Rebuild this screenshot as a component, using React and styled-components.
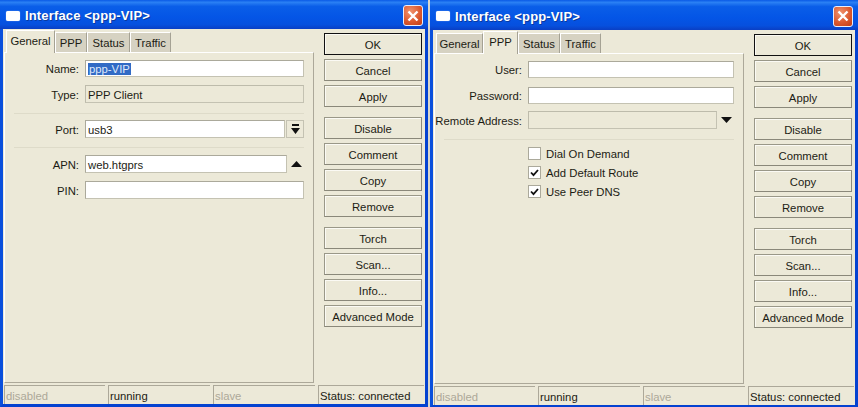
import React from 'react'
import styled, { createGlobalStyle } from 'styled-components'

const Global = createGlobalStyle`
html, body {
  margin: 0;
  padding: 0;
  background: #d8d6cc;
}
* { box-sizing: border-box; }
`

const Desktop = styled.div`
display: flex;
gap: 2px;
width: 858px;
height: 407px;
overflow: hidden;
font-family: "Liberation Sans", Arial, sans-serif;
font-size: 11.3px;
color: #1c1c14;
white-space: nowrap;
`

const Window = styled.div`
display: flex;
flex-direction: column;
width: ${p => p.$width}px;
height: 407px;
background: #ece9d8;
border-left: 3px solid #0a50dc;
border-right: 3px solid #0442d0;
border-bottom: ${p => p.$bottom}px solid #0442d0;
`

const TitleBar = styled.div`
display: flex;
align-items: center;
flex: none;
height: ${p => p.$height}px;
margin: 0 -3px;
padding: 2px 5px 0 6px;
background: linear-gradient(180deg, #0a5ae6 0%, #2a80f4 8%, #0a5ee8 22%, #0455e6 60%, #0650de 85%, #0a3fc4 100%);
`

const TitleIcon = styled.div`
width: 14px;
height: 10px;
background: #fff;
border-radius: 2px;
box-shadow: 0 0 1px #cfe0ff;
`

const TitleText = styled.div`
flex: 1;
margin-left: 5px;
font-size: 13px;
font-weight: bold;
letter-spacing: 0.15px;
color: #fff;
text-shadow: 1px 1px 0 #0a3a9e;
`

const CloseButton = styled.div`
display: flex;
align-items: center;
justify-content: center;
width: 20px;
height: 21px;
border: 1px solid #e8eefc;
border-radius: 3px;
background: radial-gradient(circle at 35% 30%, #f0936e 0%, #dc5a30 55%, #c03c14 100%);
`

const Body = styled.div`
display: flex;
flex: 1;
min-height: 0;
padding-left: 1px;
`

const Main = styled.div`
display: flex;
flex-direction: column;
width: 310px;
`

const TabRow = styled.div`
display: flex;
align-items: flex-end;
flex: none;
height: 23px;
padding-left: 2px;
`

const Tab = styled.div`
display: flex;
align-items: center;
justify-content: center;
position: relative;
width: ${p => p.$width}px;
height: ${p => (p.$active ? 23 : 20)}px;
margin-bottom: ${p => (p.$active ? -1 : 0)}px;
padding-bottom: ${p => (p.$active ? 2 : 0)}px;
background: ${p => (p.$active ? '#ece9d8' : '#d6d2c2')};
border-top: 1px solid #fff;
border-left: 1px solid #fff;
border-right: 1px solid #a5a294;
`

const Panel = styled.div`
flex: 1;
padding: 7px 9px 0 0;
border-top: 1px solid #fff;
border-left: 1px solid #fff;
border-right: 1px solid #aca899;
border-bottom: 1px solid #aca899;
`

const Row = styled.div`
display: flex;
align-items: center;
height: ${p => p.$height || 18}px;
margin-bottom: ${p => p.$gap ?? 8}px;
`

const Label = styled.div`
flex: none;
width: ${p => p.$width}px;
margin-right: 6px;
padding-top: 1px;
text-align: right;
`

const Field = styled.div`
display: flex;
align-items: center;
flex: 1;
height: 100%;
padding: 1px 0 0 2px;
background: ${p => (p.$disabled ? '#ece9d8' : '#fff')};
border: 1px solid ${p => (p.$disabled ? '#bdbbab' : '#aba99b')};
border-bottom-color: #c4c2b2;
border-right-color: #c4c2b2;
`

const Selected = styled.span`
padding: 0 1px;
background: #316ac5;
color: #dfe8fa;
`

const SpinButton = styled.div`
display: flex;
align-items: center;
justify-content: center;
flex: none;
width: 18px;
height: 100%;
margin-left: 1px;
background: #ece9d8;
border: 1px solid #c4c2b2;
`

const ArrowSlot = styled.div`
display: flex;
align-items: center;
justify-content: flex-end;
flex: none;
width: 17px;
padding-right: 2px;
`

const Divider = styled.div`
height: 1px;
margin: ${p => p.$top}px 0 ${p => p.$bottom}px 9px;
background: #dedbc9;
`

const CheckRow = styled.div`
display: flex;
align-items: center;
height: 13px;
margin-bottom: 6px;
padding-left: ${p => p.$indent}px;
`

const CheckBox = styled.div`
display: flex;
align-items: center;
justify-content: center;
flex: none;
width: 13px;
height: 13px;
margin-right: 5px;
background: #fff;
border: 1px solid #aba99b;
`

const Buttons = styled.div`
display: flex;
flex-direction: column;
width: 98px;
margin-left: 10px;
padding-top: ${p => p.$top}px;
`

const ButtonGroup = styled.div`
display: flex;
flex-direction: column;
gap: 4px;
margin-bottom: 10px;
`

const Button = styled.div`
display: flex;
align-items: center;
justify-content: center;
height: 22px;
padding-top: 1px;
background: #ece9d8;
border: 1px solid ${p => (p.$primary ? '#111' : '#8a887a')};
border-top-color: ${p => (p.$primary ? '#111' : '#9a9888')};
border-left-color: ${p => (p.$primary ? '#111' : '#9a9888')};
box-shadow: inset 1px 1px 0 #fbfaf4;
`

const StatusBar = styled.div`
display: flex;
flex: none;
gap: 3px;
height: 19px;
margin-top: 2px;
padding-left: 1px;
`

const StatusCell = styled.div`
display: flex;
align-items: center;
flex: none;
width: ${p => p.$width}px;
padding: 1px 0 0 1px;
color: ${p => (p.$muted ? '#aca899' : '#1c1c14')};
border-top: 1px solid #aca899;
border-left: 1px solid #aca899;
`

const CloseIcon = () => (
  <svg width="12" height="12" viewBox="0 0 12 12">
    <path d="M1.5 1.5 L10.5 10.5 M10.5 1.5 L1.5 10.5" stroke="#fff" strokeWidth="2.4" />
  </svg>
)

const Triangle = ({ up }) => (
  <svg width="11" height="6" viewBox="0 0 11 6">
    <path d={up ? 'M5.5 0 L11 6 L0 6 Z' : 'M0 0 L11 0 L5.5 6 Z'} fill="#111" />
  </svg>
)

const DropBarIcon = () => (
  <svg width="9" height="10" viewBox="0 0 9 10">
    <path d="M1 0 H8 V2 H1 Z M0 4 H9 L4.5 10 Z" fill="#111" />
  </svg>
)

const Check = () => (
  <svg width="9" height="8" viewBox="0 0 9 8">
    <path d="M1 3.5 L3.5 6.2 L8 1" stroke="#111" strokeWidth="1.8" fill="none" />
  </svg>
)

function GeneralTab() {
  return (
    <Panel>
      <Row $height={17}>
        <Label $width={74}>Name:</Label>
        <Field><Selected>ppp-VIP</Selected></Field>
      </Row>
      <Row $gap={0}>
        <Label $width={74}>Type:</Label>
        <Field $disabled>PPP Client</Field>
      </Row>
      <Divider $top={10} $bottom={6} />
      <Row $gap={0}>
        <Label $width={74}>Port:</Label>
        <Field>usb3</Field>
        <SpinButton><DropBarIcon /></SpinButton>
      </Row>
      <Divider $top={9} $bottom={7} />
      <Row>
        <Label $width={74}>APN:</Label>
        <Field>web.htgprs</Field>
        <ArrowSlot><Triangle up /></ArrowSlot>
      </Row>
      <Row>
        <Label $width={74}>PIN:</Label>
        <Field />
      </Row>
    </Panel>
  )
}

function PppTab() {
  return (
    <Panel>
      <Row $height={17} $gap={9}>
        <Label $width={87}>User:</Label>
        <Field />
      </Row>
      <Row $height={17} $gap={7}>
        <Label $width={87}>Password:</Label>
        <Field />
      </Row>
      <Row $gap={0}>
        <Label $width={87}>Remote Address:</Label>
        <Field $disabled />
        <ArrowSlot><Triangle /></ArrowSlot>
      </Row>
      <Divider $top={10} $bottom={7} />
      <CheckRow $indent={93}><CheckBox />Dial On Demand</CheckRow>
      <CheckRow $indent={93}><CheckBox><Check /></CheckBox>Add Default Route</CheckRow>
      <CheckRow $indent={93}><CheckBox><Check /></CheckBox>Use Peer DNS</CheckRow>
    </Panel>
  )
}

function Dialog({ width, titleHeight, bottom, active, tabWidths }) {
  return (
    <Window $width={width} $bottom={bottom}>
      <TitleBar $height={titleHeight}>
        <TitleIcon />
        <TitleText>Interface &lt;ppp-VIP&gt;</TitleText>
        <CloseButton><CloseIcon /></CloseButton>
      </TitleBar>
      <Body>
        <Main>
          <TabRow>
            {['General', 'PPP', 'Status', 'Traffic'].map((name, i) => (
              <Tab key={name} $width={tabWidths[i]} $active={name === active}>{name}</Tab>
            ))}
          </TabRow>
          {active === 'General' ? <GeneralTab /> : <PppTab />}
        </Main>
        <Buttons $top={4}>
          <ButtonGroup>
            <Button $primary>OK</Button>
            <Button>Cancel</Button>
            <Button>Apply</Button>
          </ButtonGroup>
          <ButtonGroup>
            <Button>Disable</Button>
            <Button>Comment</Button>
            <Button>Copy</Button>
            <Button>Remove</Button>
          </ButtonGroup>
          <ButtonGroup>
            <Button>Torch</Button>
            <Button>Scan...</Button>
            <Button>Info...</Button>
            <Button>Advanced Mode</Button>
          </ButtonGroup>
        </Buttons>
      </Body>
      <StatusBar>
        <StatusCell $width={101} $muted>disabled</StatusCell>
        <StatusCell $width={102}>running</StatusCell>
        <StatusCell $width={102} $muted>slave</StatusCell>
        <StatusCell $width={106}>Status: connected</StatusCell>
      </StatusBar>
    </Window>
  )
}

export default function App() {
  return (
    <>
      <Global />
      <Desktop>
        <Dialog width={428} titleHeight={29} bottom={3} active="General" tabWidths={[49, 32, 43, 41]} />
        <Dialog width={428} titleHeight={30} bottom={2} active="PPP" tabWidths={[47, 35, 42, 41]} />
      </Desktop>
    </>
  )
}
